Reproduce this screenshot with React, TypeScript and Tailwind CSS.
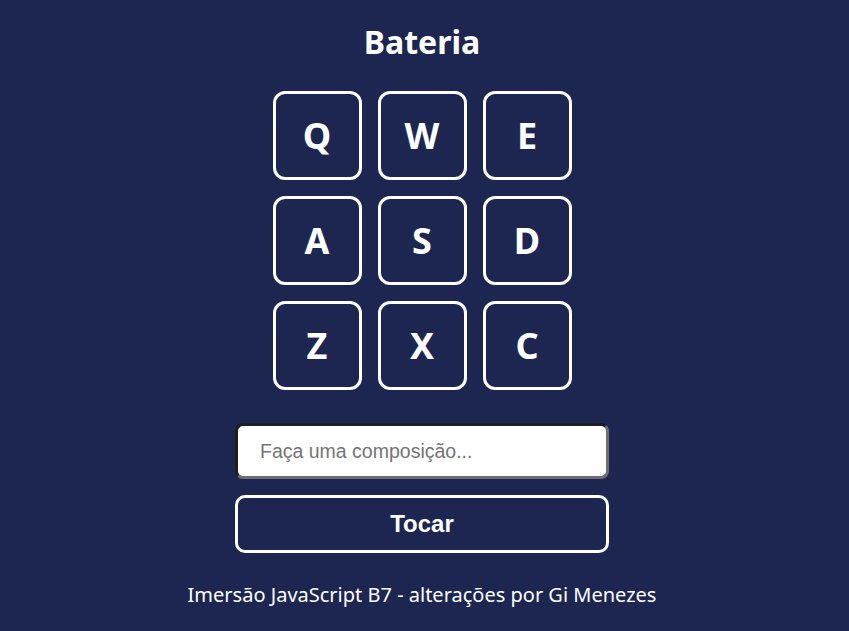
import React from 'react';

const keys = ['Q', 'W', 'E', 'A', 'S', 'D', 'Z', 'X', 'C'];

export default function App() {
  return (
    <div className="min-h-[631px] bg-[#1c2651] text-white flex flex-col items-center pr-[5px] pt-[20px] font-['Noto_Sans',sans-serif]">
      <h1 className="text-[32px] font-bold leading-[44px]">Bateria</h1>

      <div className="grid grid-cols-3 gap-4 mt-[27px]">
        {keys.map(k => (
          <div
            key={k}
            className="w-[89px] h-[89px] border-[3px] border-white rounded-xl flex items-center justify-center text-[36px] font-bold"
          >
            {k}
          </div>
        ))}
      </div>

      <input
        type="text"
        placeholder="Faça uma composição..."
        className="mt-[33px] w-[374px] h-[56px] bg-white rounded-lg border-[3px] border-t-[#1e1e1e] border-l-[#1e1e1e] border-r-[#6e6e6e] border-b-[#6e6e6e] px-[22px] text-[19.5px] text-black placeholder:text-[#757575] font-['Liberation_Sans',Arial,sans-serif] outline-none"
      />

      <button className="mt-[16px] w-[374px] h-[58px] border-[3px] border-white rounded-[10px] text-[24px] font-bold font-['Liberation_Sans',Arial,sans-serif]">
        Tocar
      </button>

      <p className="mt-[28px] text-[20px] leading-[28px]">Imersão JavaScript B7 - alterações por Gi Menezes</p>
    </div>
  );
}
